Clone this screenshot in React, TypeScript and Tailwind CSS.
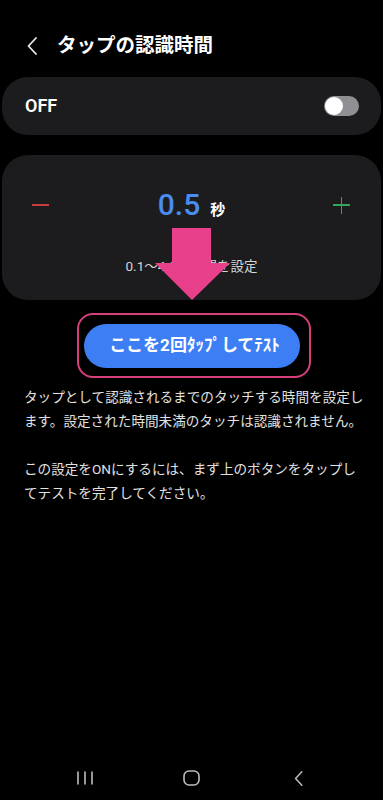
const font = {
  fontFamily: '"Roboto", "Noto Sans CJK JP", sans-serif',
};

function Chevron({ className }: { className?: string }) {
  return (
    <svg viewBox="0 0 10 18" className={className} fill="none">
      <path d="M9 1L1.5 9L9 17" stroke="currentColor" strokeWidth="1.8" strokeLinecap="round" strokeLinejoin="round" />
    </svg>
  );
}

function Toggle() {
  return (
    <div className="w-[35px] h-[20px] rounded-full bg-[#8f8f94] flex items-center px-[1px]">
      <div className="w-[18px] h-[18px] rounded-full bg-white" />
    </div>
  );
}

function Arrow() {
  return (
    <svg className="absolute left-[155px] top-[228px] w-[75px] h-[72px]" viewBox="0 0 75 72">
      <polygon points="17,0 56,0 56,35 75,35 37,72 0,35 17,35" fill="#e8408a" />
    </svg>
  );
}

export default function App() {
  return (
    <div className="relative w-[383px] h-[800px] bg-black text-white flex flex-col overflow-hidden" style={font}>
      {/* header */}
      <div className="mt-[33px] mb-[18px] h-[26px] flex items-center pl-[27px]">
        <Chevron className="w-[10px] h-[18px] text-[#e8e8e8]" />
        <h1 className="ml-[20px] text-[19.5px] font-bold leading-none">タップの認識時間</h1>
      </div>

      {/* on/off */}
      <div className="mx-[2px] h-[58px] rounded-[26px] bg-[#1c1c1e] flex items-center justify-between pl-[23px] pr-[22px]">
        <span className="text-[18px] font-semibold leading-none">OFF</span>
        <Toggle />
      </div>

      {/* value card */}
      <div className="mx-[2px] mt-[20px] h-[145px] rounded-[26px] bg-[#1c1c1e] flex flex-col pt-[35px]">
        <div className="h-[30px] flex items-center justify-between pl-[30px] pr-[31px]">
          <div className="w-[17px] h-[1.5px] bg-[#c63a40]" />
          <div className="flex items-baseline gap-[10px] pl-[1px]">
            <span className="text-[30px] font-medium text-[#4a8cf0] leading-none">0.5</span>
            <span className="text-[15px] font-bold leading-none">秒</span>
          </div>
          <div className="relative w-[17px] h-[17px]">
            <div className="absolute left-0 top-[7.75px] w-[17px] h-[1.5px] bg-[#2fa85c]" />
            <div className="absolute top-0 left-[7.75px] w-[1.5px] h-[17px] bg-[#2fa85c]" />
          </div>
        </div>
        <p className="mt-[36px] text-center text-[13.5px] leading-[20px] text-[#d6d6d6]">0.1～4.0秒の間を設定</p>
      </div>

      {/* test button */}
      <div className="mt-[13px] ml-[77px] w-[234px] h-[65px] rounded-[16px] border-2 border-[#d63f7c] flex items-center pl-[5px]">
        <button className="w-[216px] h-[44px] rounded-full bg-[#3e7ef4] text-white text-[17px] font-bold flex items-center justify-center pl-[5px]">
          ここを2回ﾀｯﾌﾟしてﾃｽﾄ
        </button>
      </div>

      {/* description */}
      <div className="mt-[7px] px-[24px] text-[13.6px] leading-[24px] text-[#e2e2e2] whitespace-nowrap">
        <p>
          <span className="block">タップとして認識されるまでのタッチする時間を設定し</span>
          <span className="block">ます。設定された時間未満のタッチは認識されません。</span>
        </p>
        <p className="mt-[24px]">
          <span className="block">この設定をONにするには、まず上のボタンをタップし</span>
          <span className="block">てテストを完了してください。</span>
        </p>
      </div>

      {/* nav bar */}
      <div className="mt-auto h-[44px] flex justify-center items-center text-[#bdbdbd]">
        <div className="w-[107px] flex justify-center">
          <svg viewBox="0 0 18 14" className="w-[18px] h-[14px]" fill="none">
            <path d="M2 1V13M9 1V13M16 1V13" stroke="currentColor" strokeWidth="1.6" strokeLinecap="round" />
          </svg>
        </div>
        <div className="w-[107px] flex justify-center">
          <svg viewBox="0 0 17 16" className="w-[17px] h-[16px]" fill="none">
            <rect x="1" y="1" width="15" height="14" rx="5" stroke="currentColor" strokeWidth="1.6" />
          </svg>
        </div>
        <div className="w-[107px] flex justify-center">
          <Chevron className="w-[9px] h-[15px]" />
        </div>
      </div>

      <Arrow />
    </div>
  );
}
